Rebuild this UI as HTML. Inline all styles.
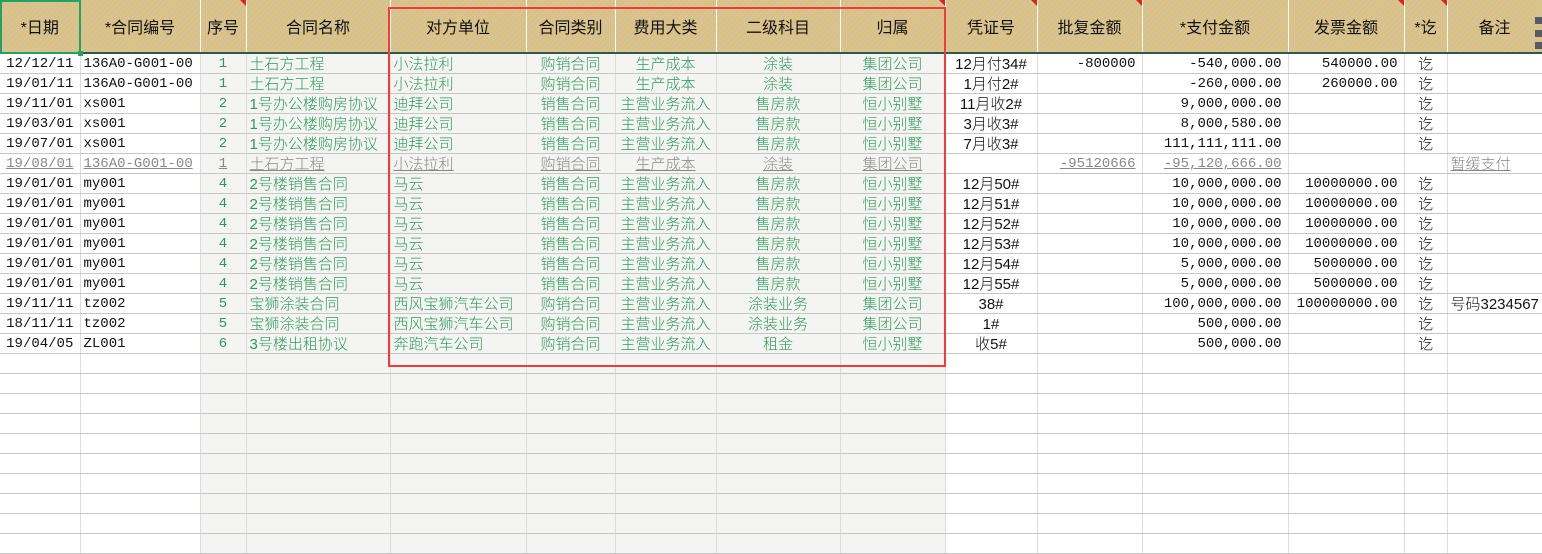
<!DOCTYPE html>
<html><head><meta charset="utf-8"><style>
body{margin:0;width:1542px;height:544px;overflow:hidden;background:#fff;position:relative;font-family:"Liberation Mono","Noto Sans CJK SC",monospace;}
table{border-collapse:collapse;table-layout:fixed;position:absolute;left:0;top:0;width:1542px}
th{height:52px;padding:0;font-weight:normal;font-size:16px;color:#111;font-family:"Liberation Sans","Noto Sans CJK SC",sans-serif;border-right:1px solid #fff;border-bottom:2px solid #2f5a4a;background:repeating-linear-gradient(135deg,#c8c4b8 0 2px,#e8c060 2px 4px);position:relative}
th.m::after{content:"";position:absolute;right:0;top:0;border-top:6px solid #e02020;border-left:6px solid transparent}
td{height:17px;padding:2px 3px 0 3px;font-size:14px;white-space:nowrap;overflow:hidden;border-bottom:1px solid #c6c6c6;border-right:1px solid #dcdcdc;color:#111;line-height:17px;vertical-align:top}
td.g{background:#f4f4f3}
.gr{color:#2b9a57}
.c{text-align:center}.r{text-align:right;padding-right:6px}
.cj{font-family:"Liberation Sans","Noto Sans CJK SC",sans-serif;font-size:15px;font-weight:300}
tr.x td{color:#888;text-decoration:underline}
#box{position:absolute;left:388px;top:7px;width:554px;height:356px;border:2px solid #f23c3c}
#sel{position:absolute;left:0;top:0;width:77px;height:50px;border:2px solid #21a366}
#sel::after{content:"";position:absolute;right:-4px;bottom:-4px;width:5px;height:5px;background:#21a366}
.sb{position:absolute;left:1535px;width:7px;height:7px;background:#555c66}
</style></head><body>
<table>
<colgroup><col style="width:80px"><col style="width:120px"><col style="width:46px"><col style="width:144px"><col style="width:136px"><col style="width:89px"><col style="width:101px"><col style="width:124px"><col style="width:105px"><col style="width:92px"><col style="width:105px"><col style="width:146px"><col style="width:116px"><col style="width:43px"><col style="width:95px"></colgroup>
<tr><th>*日期</th><th>*合同编号</th><th class="m">序号</th><th>合同名称</th><th>对方单位</th><th>合同类别</th><th>费用大类</th><th>二级科目</th><th class="m">归属</th><th class="m">凭证号</th><th class="m">批复金额</th><th>*支付金额</th><th class="m">发票金额</th><th class="m">*讫</th><th>备注</th></tr>
<tr><td class="c">12/12/11</td><td>136A0-G001-00</td><td class="g gr c">1</td><td class="g gr cj">土石方工程</td><td class="g gr cj">小法拉利</td><td class="g gr c cj">购销合同</td><td class="g gr c cj">生产成本</td><td class="g gr c cj">涂装</td><td class="g gr c cj">集团公司</td><td class="c cj">12月付34#</td><td class="r">-800000</td><td class="r">-540,000.00</td><td class="r">540000.00</td><td class="c cj">讫</td><td></td></tr>
<tr><td class="c">19/01/11</td><td>136A0-G001-00</td><td class="g gr c">1</td><td class="g gr cj">土石方工程</td><td class="g gr cj">小法拉利</td><td class="g gr c cj">购销合同</td><td class="g gr c cj">生产成本</td><td class="g gr c cj">涂装</td><td class="g gr c cj">集团公司</td><td class="c cj">1月付2#</td><td></td><td class="r">-260,000.00</td><td class="r">260000.00</td><td class="c cj">讫</td><td></td></tr>
<tr><td class="c">19/11/01</td><td>xs001</td><td class="g gr c">2</td><td class="g gr cj">1号办公楼购房协议</td><td class="g gr cj">迪拜公司</td><td class="g gr c cj">销售合同</td><td class="g gr c cj">主营业务流入</td><td class="g gr c cj">售房款</td><td class="g gr c cj">恒小别墅</td><td class="c cj">11月收2#</td><td></td><td class="r">9,000,000.00</td><td></td><td class="c cj">讫</td><td></td></tr>
<tr><td class="c">19/03/01</td><td>xs001</td><td class="g gr c">2</td><td class="g gr cj">1号办公楼购房协议</td><td class="g gr cj">迪拜公司</td><td class="g gr c cj">销售合同</td><td class="g gr c cj">主营业务流入</td><td class="g gr c cj">售房款</td><td class="g gr c cj">恒小别墅</td><td class="c cj">3月收3#</td><td></td><td class="r">8,000,580.00</td><td></td><td class="c cj">讫</td><td></td></tr>
<tr><td class="c">19/07/01</td><td>xs001</td><td class="g gr c">2</td><td class="g gr cj">1号办公楼购房协议</td><td class="g gr cj">迪拜公司</td><td class="g gr c cj">销售合同</td><td class="g gr c cj">主营业务流入</td><td class="g gr c cj">售房款</td><td class="g gr c cj">恒小别墅</td><td class="c cj">7月收3#</td><td></td><td class="r">111,111,111.00</td><td></td><td class="c cj">讫</td><td></td></tr>
<tr class="x"><td class="c">19/08/01</td><td>136A0-G001-00</td><td class="g c">1</td><td class="g cj">土石方工程</td><td class="g cj">小法拉利</td><td class="g c cj">购销合同</td><td class="g c cj">生产成本</td><td class="g c cj">涂装</td><td class="g c cj">集团公司</td><td></td><td class="r">-95120666</td><td class="r">-95,120,666.00</td><td></td><td></td><td class="cj">暂缓支付</td></tr>
<tr><td class="c">19/01/01</td><td>my001</td><td class="g gr c">4</td><td class="g gr cj">2号楼销售合同</td><td class="g gr cj">马云</td><td class="g gr c cj">销售合同</td><td class="g gr c cj">主营业务流入</td><td class="g gr c cj">售房款</td><td class="g gr c cj">恒小别墅</td><td class="c cj">12月50#</td><td></td><td class="r">10,000,000.00</td><td class="r">10000000.00</td><td class="c cj">讫</td><td></td></tr>
<tr><td class="c">19/01/01</td><td>my001</td><td class="g gr c">4</td><td class="g gr cj">2号楼销售合同</td><td class="g gr cj">马云</td><td class="g gr c cj">销售合同</td><td class="g gr c cj">主营业务流入</td><td class="g gr c cj">售房款</td><td class="g gr c cj">恒小别墅</td><td class="c cj">12月51#</td><td></td><td class="r">10,000,000.00</td><td class="r">10000000.00</td><td class="c cj">讫</td><td></td></tr>
<tr><td class="c">19/01/01</td><td>my001</td><td class="g gr c">4</td><td class="g gr cj">2号楼销售合同</td><td class="g gr cj">马云</td><td class="g gr c cj">销售合同</td><td class="g gr c cj">主营业务流入</td><td class="g gr c cj">售房款</td><td class="g gr c cj">恒小别墅</td><td class="c cj">12月52#</td><td></td><td class="r">10,000,000.00</td><td class="r">10000000.00</td><td class="c cj">讫</td><td></td></tr>
<tr><td class="c">19/01/01</td><td>my001</td><td class="g gr c">4</td><td class="g gr cj">2号楼销售合同</td><td class="g gr cj">马云</td><td class="g gr c cj">销售合同</td><td class="g gr c cj">主营业务流入</td><td class="g gr c cj">售房款</td><td class="g gr c cj">恒小别墅</td><td class="c cj">12月53#</td><td></td><td class="r">10,000,000.00</td><td class="r">10000000.00</td><td class="c cj">讫</td><td></td></tr>
<tr><td class="c">19/01/01</td><td>my001</td><td class="g gr c">4</td><td class="g gr cj">2号楼销售合同</td><td class="g gr cj">马云</td><td class="g gr c cj">销售合同</td><td class="g gr c cj">主营业务流入</td><td class="g gr c cj">售房款</td><td class="g gr c cj">恒小别墅</td><td class="c cj">12月54#</td><td></td><td class="r">5,000,000.00</td><td class="r">5000000.00</td><td class="c cj">讫</td><td></td></tr>
<tr><td class="c">19/01/01</td><td>my001</td><td class="g gr c">4</td><td class="g gr cj">2号楼销售合同</td><td class="g gr cj">马云</td><td class="g gr c cj">销售合同</td><td class="g gr c cj">主营业务流入</td><td class="g gr c cj">售房款</td><td class="g gr c cj">恒小别墅</td><td class="c cj">12月55#</td><td></td><td class="r">5,000,000.00</td><td class="r">5000000.00</td><td class="c cj">讫</td><td></td></tr>
<tr><td class="c">19/11/11</td><td>tz002</td><td class="g gr c">5</td><td class="g gr cj">宝狮涂装合同</td><td class="g gr cj">西风宝狮汽车公司</td><td class="g gr c cj">购销合同</td><td class="g gr c cj">主营业务流入</td><td class="g gr c cj">涂装业务</td><td class="g gr c cj">集团公司</td><td class="c cj">38#</td><td></td><td class="r">100,000,000.00</td><td class="r">100000000.00</td><td class="c cj">讫</td><td class="cj" style="overflow:visible">号码3234567</td></tr>
<tr><td class="c">18/11/11</td><td>tz002</td><td class="g gr c">5</td><td class="g gr cj">宝狮涂装合同</td><td class="g gr cj">西风宝狮汽车公司</td><td class="g gr c cj">购销合同</td><td class="g gr c cj">主营业务流入</td><td class="g gr c cj">涂装业务</td><td class="g gr c cj">集团公司</td><td class="c cj">1#</td><td></td><td class="r">500,000.00</td><td></td><td class="c cj">讫</td><td></td></tr>
<tr><td class="c">19/04/05</td><td>ZL001</td><td class="g gr c">6</td><td class="g gr cj">3号楼出租协议</td><td class="g gr cj">奔跑汽车公司</td><td class="g gr c cj">购销合同</td><td class="g gr c cj">主营业务流入</td><td class="g gr c cj">租金</td><td class="g gr c cj">恒小别墅</td><td class="c cj">收5#</td><td></td><td class="r">500,000.00</td><td></td><td class="c cj">讫</td><td></td></tr>
<tr><td></td><td></td><td class="g"></td><td class="g"></td><td class="g"></td><td class="g"></td><td class="g"></td><td class="g"></td><td class="g"></td><td></td><td></td><td></td><td></td><td></td><td></td></tr>
<tr><td></td><td></td><td class="g"></td><td class="g"></td><td class="g"></td><td class="g"></td><td class="g"></td><td class="g"></td><td class="g"></td><td></td><td></td><td></td><td></td><td></td><td></td></tr>
<tr><td></td><td></td><td class="g"></td><td class="g"></td><td class="g"></td><td class="g"></td><td class="g"></td><td class="g"></td><td class="g"></td><td></td><td></td><td></td><td></td><td></td><td></td></tr>
<tr><td></td><td></td><td class="g"></td><td class="g"></td><td class="g"></td><td class="g"></td><td class="g"></td><td class="g"></td><td class="g"></td><td></td><td></td><td></td><td></td><td></td><td></td></tr>
<tr><td></td><td></td><td class="g"></td><td class="g"></td><td class="g"></td><td class="g"></td><td class="g"></td><td class="g"></td><td class="g"></td><td></td><td></td><td></td><td></td><td></td><td></td></tr>
<tr><td></td><td></td><td class="g"></td><td class="g"></td><td class="g"></td><td class="g"></td><td class="g"></td><td class="g"></td><td class="g"></td><td></td><td></td><td></td><td></td><td></td><td></td></tr>
<tr><td></td><td></td><td class="g"></td><td class="g"></td><td class="g"></td><td class="g"></td><td class="g"></td><td class="g"></td><td class="g"></td><td></td><td></td><td></td><td></td><td></td><td></td></tr>
<tr><td></td><td></td><td class="g"></td><td class="g"></td><td class="g"></td><td class="g"></td><td class="g"></td><td class="g"></td><td class="g"></td><td></td><td></td><td></td><td></td><td></td><td></td></tr>
<tr><td></td><td></td><td class="g"></td><td class="g"></td><td class="g"></td><td class="g"></td><td class="g"></td><td class="g"></td><td class="g"></td><td></td><td></td><td></td><td></td><td></td><td></td></tr>
<tr><td></td><td></td><td class="g"></td><td class="g"></td><td class="g"></td><td class="g"></td><td class="g"></td><td class="g"></td><td class="g"></td><td></td><td></td><td></td><td></td><td></td><td></td></tr>
</table>
<div id="sel"></div>
<div id="box"></div>
<div class="sb" style="top:17px"></div><div class="sb" style="top:30px"></div><div class="sb" style="top:42px"></div>
</body></html>
